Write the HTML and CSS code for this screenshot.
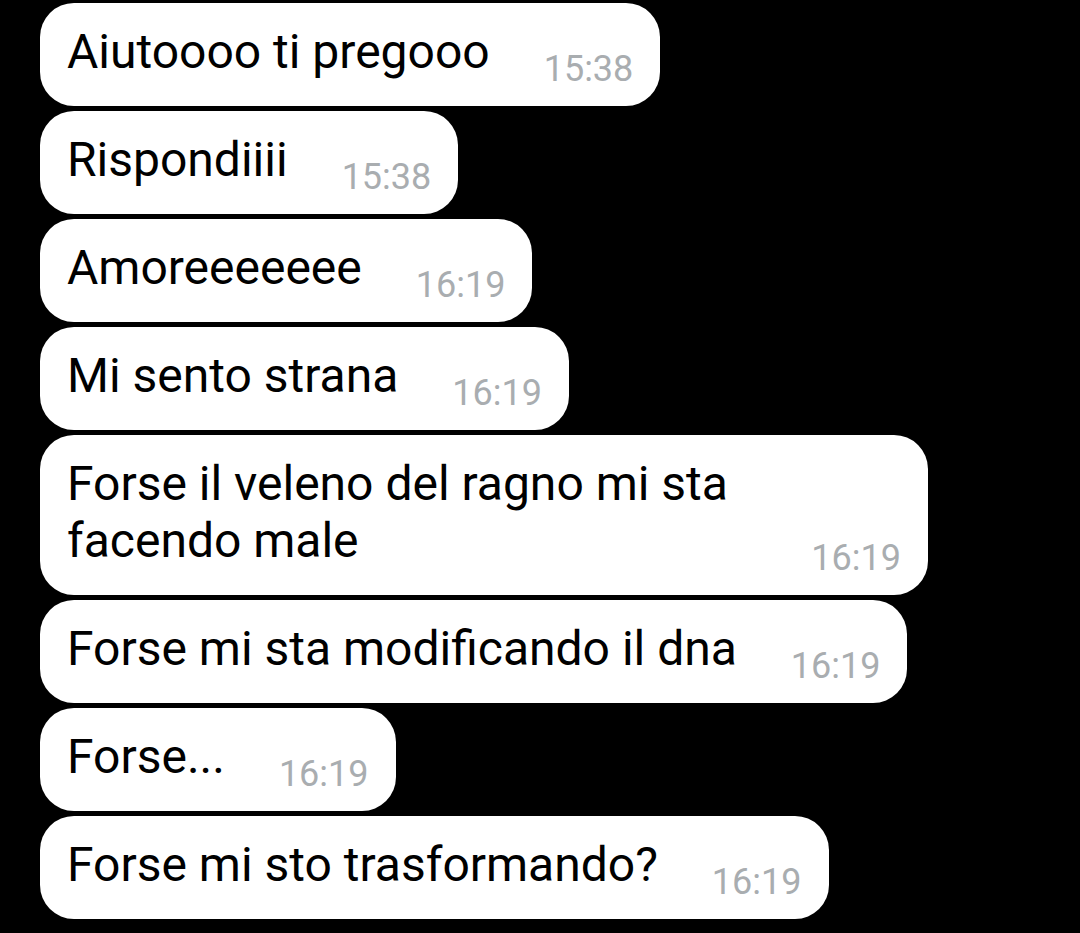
FILE: index.html
```html
<!DOCTYPE html>
<html>

<head>
    <meta charset="UTF-8">
    <title>Chat</title>
    <link rel="stylesheet" href="styles.css">
</head>

<body>

<div id="chat">
    <div class="msg">
        <span class="text">Aiutoooo ti pregooo</span>
        <span class="time">15:38</span>
    </div>
    <div class="msg">
        <span class="text">Rispondiiii</span>
        <span class="time">15:38</span>
    </div>
    <div class="msg">
        <span class="text">Amoreeeeeee</span>
        <span class="time">16:19</span>
    </div>
    <div class="msg">
        <span class="text">Mi sento strana</span>
        <span class="time">16:19</span>
    </div>
    <div class="msg">
        <span class="text">Forse il veleno del ragno mi sta facendo male</span>
        <span class="time">16:19</span>
    </div>
    <div class="msg">
        <span class="text">Forse mi sta modificando il dna</span>
        <span class="time">16:19</span>
    </div>
    <div class="msg">
        <span class="text">Forse...</span>
        <span class="time">16:19</span>
    </div>
    <div class="msg">
        <span class="text">Forse mi sto trasformando?</span>
        <span class="time">16:19</span>
    </div>
</div>

</body>

</html>
```

FILE: styles.css
```css
* {
    margin: 0;
    padding: 0;
}
body {
    background: #000;
    font-family: Roboto, "Liberation Sans", sans-serif;
}
#chat {
    display: flex;
    flex-direction: column;
    align-items: flex-start;
    gap: 5px;
    padding: 3px 0 0 40px;
}
.msg {
    display: flex;
    max-width: 888px;
    box-sizing: border-box;
    padding: 20px 27px 17px 27px;
    border-radius: 34px;
    background: #fff;
}
.msg .text {
    font-size: 48px;
    line-height: 57px;
    color: #000;
    margin-bottom: 9px;
}
.msg .time {
    flex-shrink: 0;
    align-self: flex-end;
    margin-left: 54px;
    font-size: 36px;
    line-height: 40px;
    color: #a9adb0;
}
```
